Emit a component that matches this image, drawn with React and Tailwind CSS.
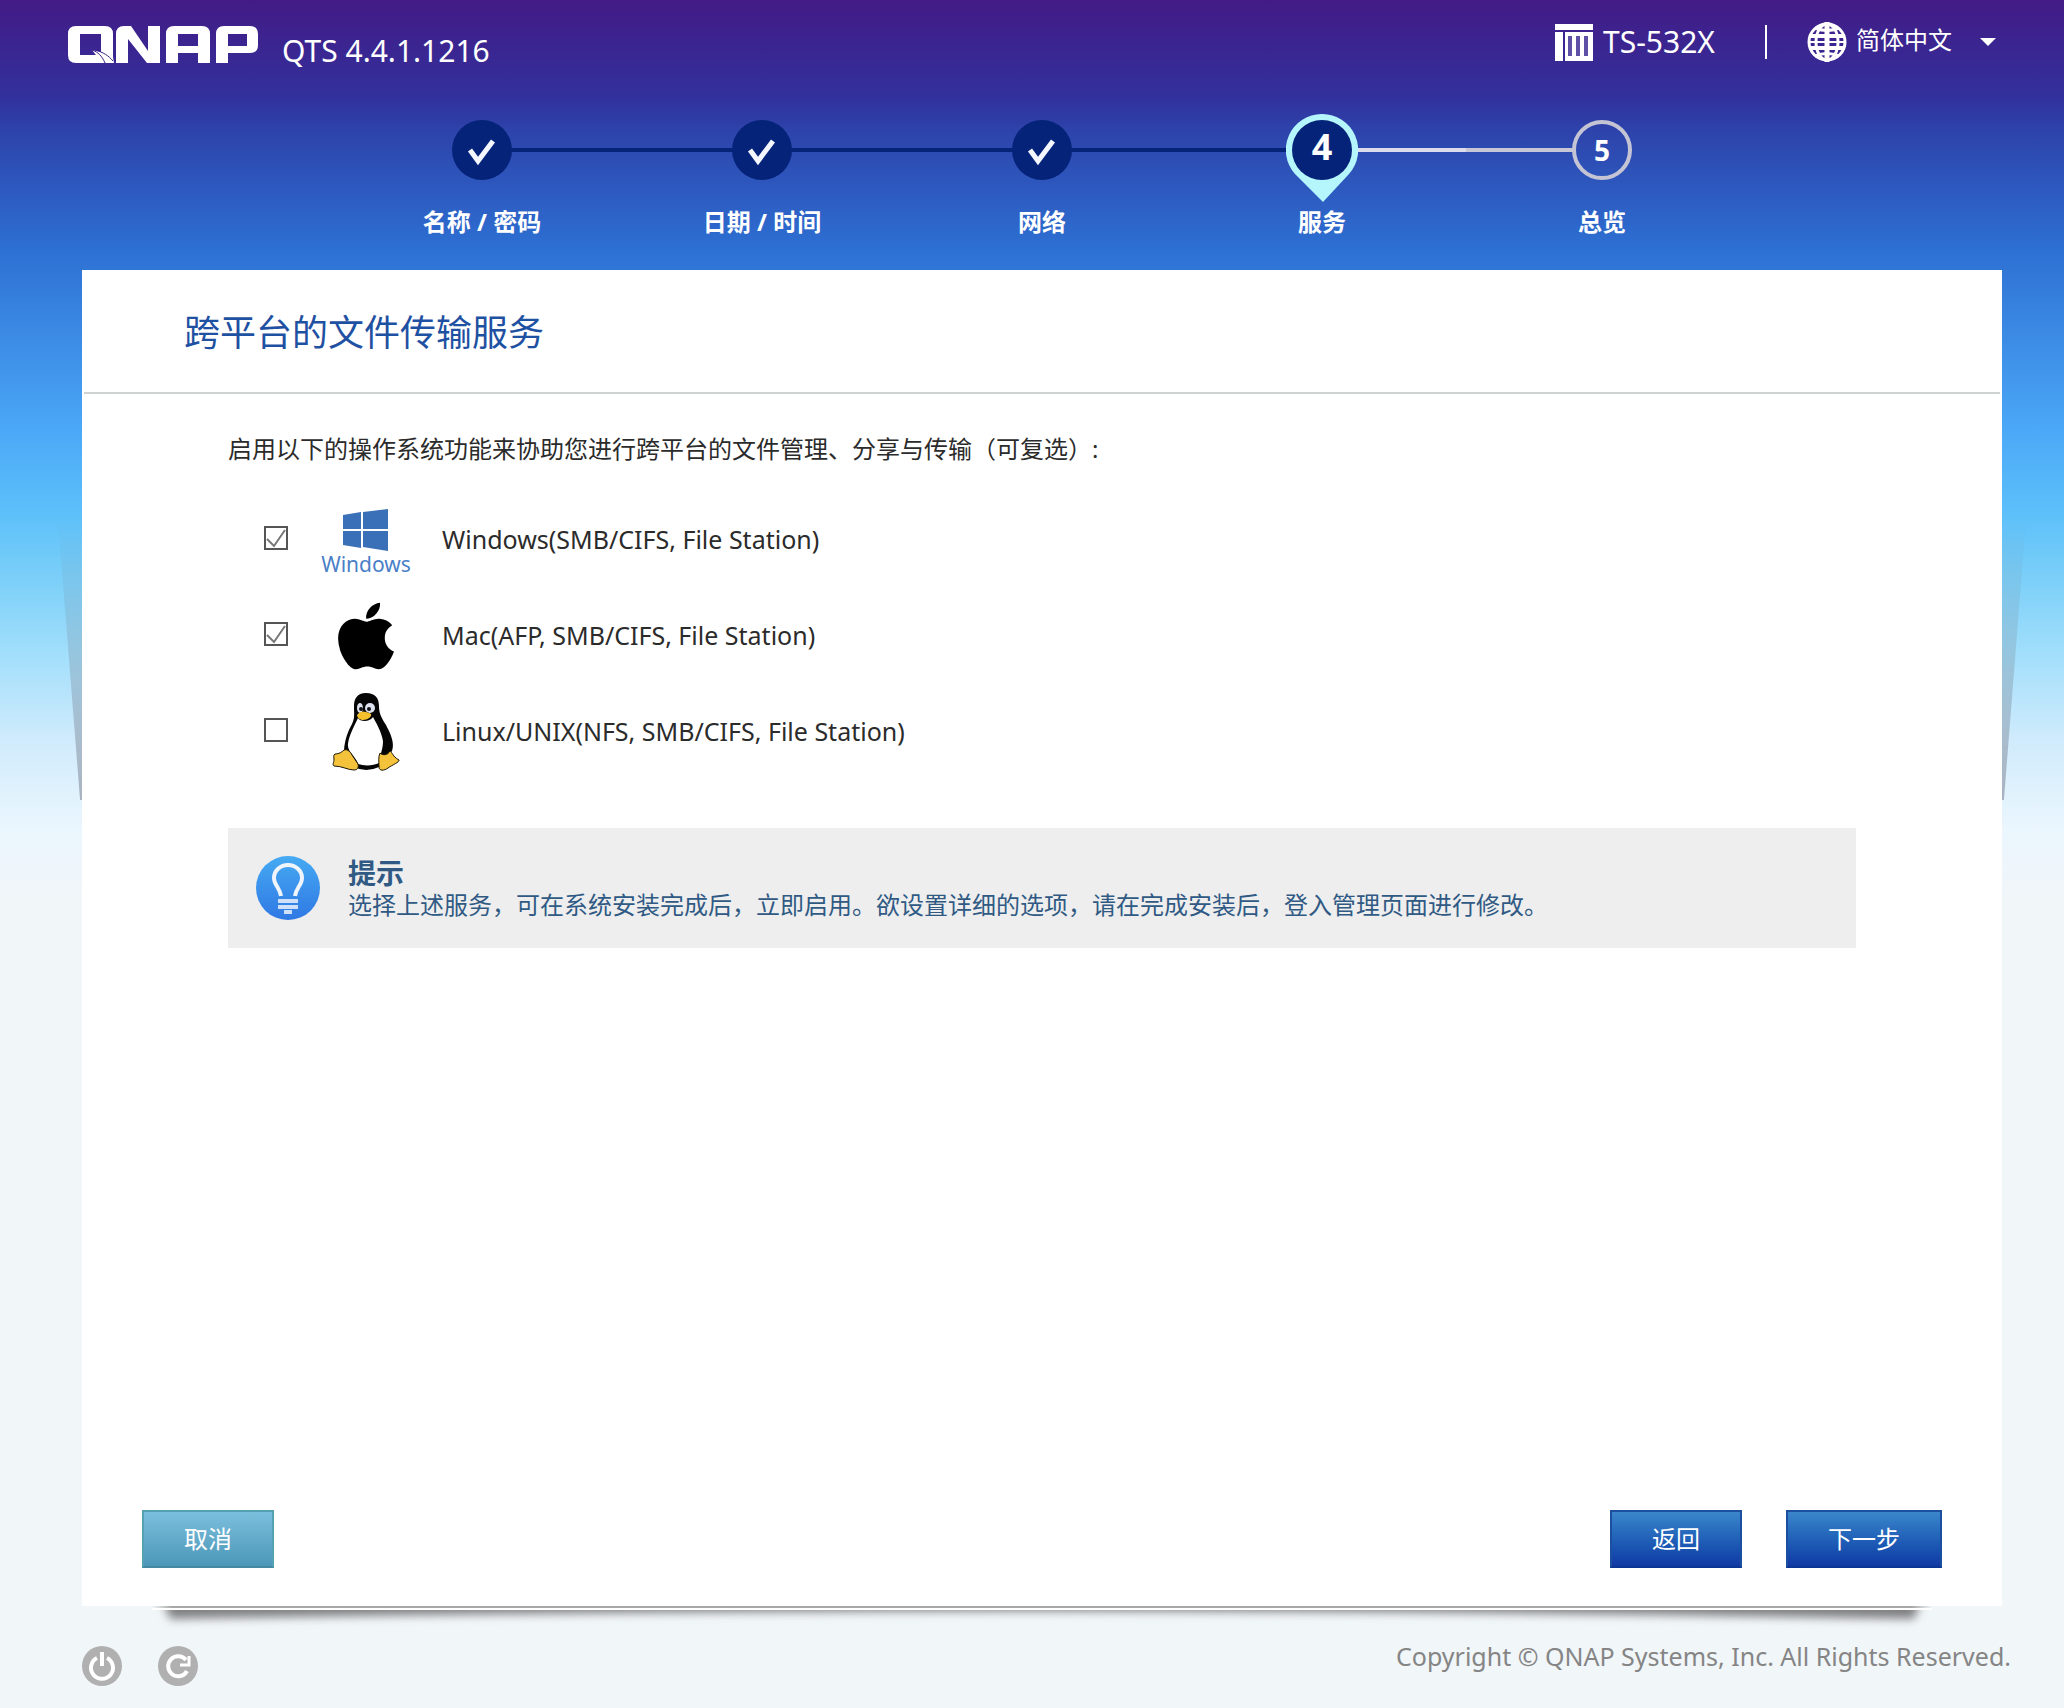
import React, { useState } from 'react';
import { FaApple } from 'react-icons/fa';

const STEPS = [
  { id: 1, label: '名称 / 密码' },
  { id: 2, label: '日期 / 时间' },
  { id: 3, label: '网络' },
  { id: 4, label: '服务' },
  { id: 5, label: '总览' },
];

const QnapLogo = () => (
  <svg viewBox="0 0 190 37" className="w-[190px] h-[37px]" role="img" aria-label="QNAP">
    <g fill="#fff" fillRule="evenodd">
      <path d="M8 0h29q8 0 8 8v23l1 6H8q-8 0-8-8V8q0-8 8-8zM12 8v21h21V8z" />
      <path d="M48 37V8q0-8 8-8h7l17 25V0h12v37H79L60 13v24z" />
      <path d="M98 37V8q0-8 8-8h28q8 0 8 8v29h-12V27h-20v10zM110 8v12h20V8z" />
      <path d="M148 37V8q0-8 8-8h26q8 0 8 8v11q0 8-8 8h-22v10zM160 8v12h19V8z" />
      <path d="M24 24l9 2v3h-5z" />
    </g>
    <path d="M24 24c6 2 10 6 13 13M27 24c8 2 14 6 18 11" fill="none" stroke="#3d2288" strokeWidth="1" />
  </svg>
);

const NasIcon = () => (
  <svg viewBox="0 0 38 38" className="w-[38px] h-[38px]" aria-hidden="true">
    <path d="M0 1h38v6H0zM0 9h8v29H0zM10 9h28v29H10z" fill="#fff" />
    <path d="M13 13h4v20h-4zM21 13h4v20h-4zM29 13h4v20h-4z" fill="#5d50a6" />
  </svg>
);

const GlobeIcon = () => (
  <svg viewBox="0 0 40 40" className="w-10 h-10" fill="none" stroke="#fff" aria-hidden="true">
    <circle cx="20" cy="20" r="18" strokeWidth="3" />
    <ellipse cx="20" cy="20" rx="11" ry="18" strokeWidth="3" />
    <path d="M20 0v40" strokeWidth="5" />
    <path d="M2 14h36M2 26h36" strokeWidth="4" />
    <path d="M2 20h36" strokeWidth="2" />
    <path d="M8 6q12 5 24 0M8 34q12-5 24 0" strokeWidth="3" />
  </svg>
);

const WindowsLogo = () => (
  <span className="pt-[6px] flex flex-col items-center text-[#4a7fc8]">
    <svg viewBox="0 0 45 42" className="w-[45px] h-[42px]" fill="#3a70b7" aria-hidden="true">
      <path d="M0 6l18-3v17H0zM20 3l25-3v20H20zM0 22h18v17L0 36zM20 22h25v20l-25-4z" />
    </svg>
    <span className="text-[21px] leading-[26px]">Windows</span>
  </span>
);

const TuxLogo = () => (
  <svg viewBox="0 0 68 78" className="w-[68px] h-[78px]" aria-hidden="true">
    <path d="M34 0c-9 0-12 6-12 13 0 8 1 12-2 18C16 38 13 46 12 57l10 17q12 6 25 0l13-16c3-9-2-18-6-26-5-8-7-12-7-19 0-8-4-13-13-13z" fill="#050505" />
    <path d="M26 25c2 4 12 4 15-1 3 6 8 13 10 24 0 9-3 13-4 22-6 3-15 3-21 1-2-8-11-12-10-20 1-9 6-17 10-26z" fill="#fff" />
    <ellipse cx="28" cy="15" rx="3" ry="5" fill="#dde2ee" />
    <ellipse cx="38" cy="15" rx="5" ry="5" fill="#dde2ee" />
    <circle cx="29" cy="16" r="2" fill="#111" />
    <circle cx="37" cy="16" r="2" fill="#111" />
    <path d="M25 22c3-4 6-4 9-3 3 1 6 1 5 4-2 3-6 4-8 4s-6-2-6-5z" fill="#f5c12c" />
    <path d="M12 57c3-1 6 1 8 5l6 9c1 4-1 6-4 6-6 0-12-4-20-4-2-1 0-4 0-6 0-3-1-5 1-6 4 0 7-2 9-4z" fill="#f5c33b" stroke="#1a1505" strokeWidth="1" />
    <path d="M48 60c3 3 8 2 10-2 3 2 2 5 9 9 1 2-7 5-11 8-4 3-9 3-9-1 0-5-1-10 1-14z" fill="#f5c33b" stroke="#1a1505" strokeWidth="1" />
  </svg>
);

const BulbIcon = () => (
  <svg viewBox="0 0 64 64" className="w-16 h-16 shrink-0" aria-hidden="true">
    <defs>
      <linearGradient id="bulb" x1="0" y1="0" x2="0" y2="1">
        <stop offset="0" stopColor="#46aaf2" />
        <stop offset="1" stopColor="#2f78e4" />
      </linearGradient>
    </defs>
    <circle cx="32" cy="32" r="32" fill="url(#bulb)" />
    <path d="M25 40c-1-8-7-11-7-18a14 13 0 0 1 28 0c0 7-6 10-7 18" fill="none" stroke="#f0f4fb" strokeWidth="4" />
    <path d="M22 43h20v4H22zM22 49h20v4H22z" fill="#cfe0fa" />
    <path d="M28 54h8v4h-8z" fill="#cfe0fa" />
  </svg>
);

const StepMarker = ({ id, current }) => {
  if (id < current) {
    return (
      <svg viewBox="0 0 60 60" className="relative w-15 h-15" aria-hidden="true">
        <circle cx="30" cy="30" r="30" fill="#052378" />
        <path d="M18 30l8 11 15-20" fill="none" stroke="#f4f7ff" strokeWidth="5" />
      </svg>
    );
  }
  if (id === current) {
    return (
      <div className="relative -mt-[6px] -mb-[22px] w-[72px] h-[88px]">
        <svg viewBox="0 0 72 88" className="w-full h-full" aria-hidden="true">
          <path d="M36 0a36 36 0 0 1 27 60L37 88 9 60A36 36 0 0 1 36 0z" fill="#b5f6fd" />
          <circle cx="36" cy="36" r="30" fill="#052378" />
        </svg>
        <span className="absolute inset-x-0 top-0 text-center text-[36px] leading-[66px] font-bold">{id}</span>
      </div>
    );
  }
  return (
    <div className="relative w-15 h-15 rounded-full border-4 border-[#c4c4d4] flex items-center justify-center text-[28px] leading-none font-bold">
      {id}
    </div>
  );
};

const Stepper = ({ current }) => (
  <ol className="flex justify-center pt-[30px]">
    {STEPS.map((step) => (
      <li key={step.id} className="relative w-[280px] flex flex-col items-center text-white">
        {step.id > 1 && (
          <span
            className={`absolute top-7 right-[168px] h-1 ${step.id <= current ? 'w-[224px] bg-[#052378]' : 'w-[216px] bg-linear-to-r from-[#dcdcec] from-50% to-[#c6c6d6] to-50%'}`}
          />
        )}
        <StepMarker id={step.id} current={current} />
        <span className="mt-[26px] mb-[2px] text-[24px] leading-[32px] font-bold whitespace-nowrap">{step.label}</span>
      </li>
    ))}
  </ol>
);

const ServiceRow = ({ id, label, logo, checked, onToggle }) => (
  <div className="flex items-center h-24">
    <input
      id={id}
      type="checkbox"
      checked={checked}
      onChange={onToggle}
      className="peer appearance-none w-6 h-6 border-2 border-[#555] bg-white shrink-0"
    />
    <svg viewBox="0 0 24 24" className="-ml-6 w-6 h-6 hidden peer-checked:block pointer-events-none" aria-hidden="true">
      <path d="M3 13l7 7L21 4" fill="none" stroke="#777" strokeWidth="2" />
    </svg>
    <label htmlFor={id} className="flex items-center">
      <span className="ml-6 w-[108px] pt-1 flex justify-center">{logo}</span>
      <span className="ml-[22px] pt-[2px] text-[25px]">{label}</span>
    </label>
  </div>
);

const primaryButton =
  'h-[58px] border-2 border-[#1d4f9f] border-b-[#0d3593] bg-linear-to-b from-[#3a86cb] to-[#1139a4] text-white';

const App = () => {
  const [services, setServices] = useState({ windows: true, mac: true, linux: false });

  const toggle = (key) => setServices({ ...services, [key]: !services[key] });

  return (
    <div className="min-h-screen flex flex-col text-[24px] leading-[32px] text-[#2b2b2b] font-['Noto_Sans','Noto_Sans_CJK_SC',sans-serif] bg-[#f1f6f9] bg-[linear-gradient(to_bottom,#431b86_0px,#32309c_96px,#2d43ab_130px,#2d70d3_250px,#4ba8f7_430px,#5cbffa_510px,#72cbf8_560px,#a0defb_650px,#d0ebfc_740px,#ebf6fe_830px,#f1f6f9_900px)]">
      <header className="h-[90px] pl-[68px] pr-[68px] flex items-start justify-between text-white">
        <div className="flex items-start">
          <div className="mt-[26px]"><QnapLogo /></div>
          <span className="ml-6 mt-[30px] text-[30px] leading-[42px]">QTS 4.4.1.1216</span>
        </div>
        <div className="flex items-center mt-[22px] h-10">
          <NasIcon />
          <span className="ml-[10px] w-[120px] text-[30px] leading-[40px]">TS-532X</span>
          <span className="ml-[42px] w-[2px] h-[34px] bg-white" />
          <button type="button" className="ml-10 flex items-center">
            <GlobeIcon />
            <span className="ml-[9px] pb-1">简体中文</span>
            <svg viewBox="0 0 16 8" className="ml-7 w-4 h-2" aria-hidden="true">
              <path d="M0 0h16L8 8z" fill="#fff" />
            </svg>
          </button>
        </div>
      </header>

      {/* Panel */}
      <div className="flex-1 flex flex-col ml-[82px] mr-[62px]">
        <Stepper current={4} />

        <div className="relative flex-1 flex flex-col mt-[30px]">
          {/* Side shadows */}
          <div className="absolute top-[250px] -left-6 w-6 h-[280px] [clip-path:polygon(0_0,100%_0,100%_100%,92%_100%)] bg-linear-to-b from-transparent to-[#6e7484]/50" />
          <div className="absolute top-[250px] -right-6 w-6 h-[280px] [clip-path:polygon(0_0,100%_0,8%_100%,0_100%)] bg-linear-to-b from-transparent to-[#6e7484]/50" />

          <main className="relative flex-1 flex flex-col bg-white">
            <h1 className="mx-[2px] h-[124px] pl-[100px] pt-[38px] border-b-2 border-[#cfd2d2] text-[36px] leading-[50px] text-[#1f51a2]">
              跨平台的文件传输服务
            </h1>

            <div className="ml-[146px] mr-[146px] pt-[39px]">
              <p>启用以下的操作系统功能来协助您进行跨平台的文件管理、分享与传输（可复选）:</p>

              <div className="pl-9 pt-[25px]">
                <ServiceRow
                  id="svc-windows"
                  label="Windows(SMB/CIFS, File Station)"
                  logo={<WindowsLogo />}
                  checked={services.windows}
                  onToggle={() => toggle('windows')}
                />
                <ServiceRow
                  id="svc-mac"
                  label="Mac(AFP, SMB/CIFS, File Station)"
                  logo={<FaApple className="w-[76px] h-[76px] text-black" />}
                  checked={services.mac}
                  onToggle={() => toggle('mac')}
                />
                <ServiceRow
                  id="svc-linux"
                  label="Linux/UNIX(NFS, SMB/CIFS, File Station)"
                  logo={<TuxLogo />}
                  checked={services.linux}
                  onToggle={() => toggle('linux')}
                />
              </div>

              <aside className="mt-[50px] h-[120px] pl-7 flex items-center bg-[#eee] text-[#305a84]">
                <BulbIcon />
                <div className="ml-7 pt-[2px]">
                  <h2 className="text-[28px] leading-[32px] font-bold">提示</h2>
                  <p>选择上述服务，可在系统安装完成后，立即启用。欲设置详细的选项，请在完成安装后，登入管理页面进行修改。</p>
                </div>
              </aside>
            </div>

            <div className="mt-auto pl-15 pr-15 pb-[38px] flex">
              <button type="button" className="w-[132px] h-[58px] border-2 border-[#56a0b4] border-b-[#4389a3] bg-linear-to-b from-[#7bbfdd] to-[#4c97b8] text-white">
                取消
              </button>
              <button type="button" className={`ml-auto w-[132px] ${primaryButton}`}>返回</button>
              <button type="button" className={`ml-11 w-[156px] ${primaryButton}`}>下一步</button>
            </div>
          </main>
        </div>
      </div>

      <footer className="h-[102px] pl-[82px] pr-[53px] relative flex items-start justify-between">
        {/* Shadow cast under the panel */}
        <div className="absolute top-0 left-[152px] right-[132px]">
          <div className="h-[2px] bg-[linear-gradient(to_right,transparent,#a8a8a8_20px,#a8a8a8_calc(100%-20px),transparent)]" />
          <div className="h-[2px] bg-white" />
          <svg viewBox="0 0 1780 24" preserveAspectRatio="none" className="w-full h-6" aria-hidden="true">
            <defs>
              <filter id="soft" x="-5%" y="-50%" width="110%" height="200%">
                <feGaussianBlur stdDeviation="5" />
              </filter>
            </defs>
            <path d="M10 -12H1770L1762 9Q890 -7 18 9z" fill="#808082" filter="url(#soft)" />
          </svg>
        </div>
        <div className="mt-10 flex gap-9">
          <button type="button" aria-label="关机">
            <svg viewBox="0 0 40 40" className="w-10 h-10" fill="none" stroke="#fff">
              <circle cx="20" cy="20" r="20" fill="#b0b0b0" stroke="none" />
              <path d="M15 12a11 11 0 1 0 10 0M20 6v14" strokeWidth="4" />
            </svg>
          </button>
          <button type="button" aria-label="重新启动">
            <svg viewBox="0 0 40 40" className="w-10 h-10" fill="none" stroke="#fff">
              <circle cx="20" cy="20" r="20" fill="#b0b0b0" stroke="none" />
              <path d="M28 14a10 10 0 1 0 1 11" strokeWidth="4" />
              <path d="M31 10v9H22" strokeWidth="3" />
            </svg>
          </button>
        </div>
        <p className="mt-[34px] text-[25px] text-[#858585]">Copyright © QNAP Systems, Inc. All Rights Reserved.</p>
      </footer>
    </div>
  );
};

export default App;
